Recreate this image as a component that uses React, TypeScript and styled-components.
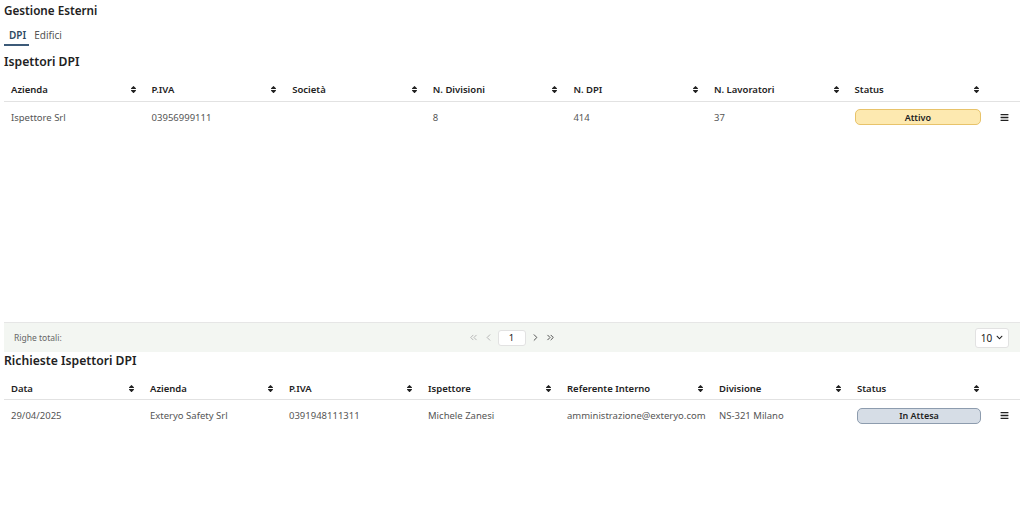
import React from "react";
import styled, { createGlobalStyle } from "styled-components";
import { FaSort, FaBars, FaChevronDown } from "react-icons/fa";
import { ChevronLeft, ChevronRight, ChevronsLeft, ChevronsRight } from "lucide-react";

const Global = createGlobalStyle`
  html, body { margin: 0; padding: 0; background: #fff; }
  body { font-family: "Noto Sans", "Open Sans", sans-serif; color: #333; }
  * { box-sizing: border-box; }
`;

const Page = styled.div`
  display: flex;
  flex-direction: column;
  padding: 0 4px;
  width: 1024px;
  height: 530px;
`;

const Title = styled.h1`
  margin: 0;
  padding-top: 2px;
  font-size: 11.7px;
  font-weight: 600;
  color: #222;
  height: 28px;
  line-height: 16px;
`;

const Tabs = styled.div`
  display: flex;
  height: 22px;
  align-items: flex-start;
`;

const Tab = styled.div<{ $active?: boolean }>`
  font-size: 10px;
  line-height: 14px;
  padding: 0 3px 2px 5px;
  color: ${(p) => (p.$active ? "#2d4a63" : "#555")};
  font-weight: ${(p) => (p.$active ? 600 : 400)};
  border-bottom: 2px solid ${(p) => (p.$active ? "#3c5a78" : "transparent")};
`;

const SectionTitle = styled.h2<{ $first?: boolean }>`
  margin: 0;
  font-size: 12.2px;
  font-weight: 600;
  color: #222;
  line-height: 18px;
  height: ${(p) => (p.$first ? "28.5px" : "25px")};
  padding-top: ${(p) => (p.$first ? "3px" : "0")};
`;

const TableBox = styled.div<{ $h?: number }>`
  display: flex;
  flex-direction: column;
  height: ${(p) => (p.$h ? `${p.$h}px` : "auto")};
`;

const Grid = styled.div<{ $cols: string }>`
  display: grid;
  grid-template-columns: ${(p) => p.$cols};
`;

const HeadRow = styled(Grid)`
  height: 23px;
  border-bottom: 1.5px solid #e2e2e2;
  align-items: center;
`;

const HeadCell = styled.div`
  display: flex;
  align-items: center;
  justify-content: space-between;
  padding: 0 7px 0 7px;
  font-size: 9.5px;
  font-weight: 600;
  color: #222;
  svg { width: 9px; height: 9px; color: #222; }
`;

const BodyRow = styled(Grid)`
  height: 31px;
  align-items: center;
`;

const Cell = styled.div`
  padding: 0 7px;
  font-size: 9.5px;
  color: #555;
  white-space: nowrap;
`;

const Badge = styled.div<{ $kind: "yellow" | "gray" }>`
  height: 16px;
  border-radius: 5px;
  display: flex;
  align-items: center;
  justify-content: center;
  font-size: 9px;
  font-weight: 600;
  color: #222;
  background: ${(p) => (p.$kind === "yellow" ? "#fde9b0" : "#d6dde6")};
  border: 1px solid ${(p) => (p.$kind === "yellow" ? "#e8c36a" : "#8d9cae")};
`;

const MenuCell = styled.div`
  display: flex;
  justify-content: center;
  svg { width: 9px; height: 9px; color: #222; }
`;

const Spacer = styled.div`
  flex: 1;
`;

const Footer = styled.div`
  height: 30px;
  background: #f3f6f2;
  border-top: 1.5px solid #e6e6e6;
  display: grid;
  grid-template-columns: 1fr auto 1fr;
  align-items: center;
  padding: 0 11px 0 10px;
`;

const FooterLabel = styled.div`
  font-size: 8.5px;
  color: #666;
`;

const Pager = styled.div`
  display: flex;
  align-items: center;
  gap: 4px;
`;

const PagerArrow = styled.span<{ $dim?: boolean }>`
  display: flex;
  color: ${(p) => (p.$dim ? "#b0b0b0" : "#444")};
  svg { width: 11px; height: 11px; }
`;

const PageBox = styled.div`
  width: 28px;
  height: 16px;
  background: #fff;
  border: 1px solid #e2e2e2;
  border-radius: 3px;
  font-size: 9.5px;
  color: #222;
  display: flex;
  align-items: center;
  justify-content: center;
`;

const SizeSelect = styled.div`
  justify-self: end;
  width: 34px;
  height: 20px;
  background: #fff;
  border: 1px solid #e2e2e2;
  border-radius: 3px;
  display: flex;
  align-items: center;
  justify-content: center;
  gap: 4px;
  font-size: 10px;
  color: #222;
  svg { width: 7px; height: 7px; }
`;

const cols1 = "repeat(7, 140.6px) 32px";
const cols2 = "139px 139px 139px 139px 152px 138px 138px 32px";

function Head({ labels, cols }: { labels: string[]; cols: string }) {
  return (
    <HeadRow $cols={cols}>
      {labels.map((l) => (
        <HeadCell key={l}>
          <span>{l}</span>
          <FaSort />
        </HeadCell>
      ))}
      <div />
    </HeadRow>
  );
}

export default function App() {
  return (
    <>
      <Global />
      <Page>
        <Title>Gestione Esterni</Title>
        <Tabs>
          <Tab $active>DPI</Tab>
          <Tab>Edifici</Tab>
        </Tabs>
        <SectionTitle $first>Ispettori DPI</SectionTitle>
        <TableBox $h={273.5}>
          <Head
            cols={cols1}
            labels={["Azienda", "P.IVA", "Società", "N. Divisioni", "N. DPI", "N. Lavoratori", "Status"]}
          />
          <BodyRow $cols={cols1}>
            <Cell>Ispettore Srl</Cell>
            <Cell>03956999111</Cell>
            <Cell></Cell>
            <Cell>8</Cell>
            <Cell>414</Cell>
            <Cell>37</Cell>
            <Cell>
              <Badge $kind="yellow">Attivo</Badge>
            </Cell>
            <MenuCell>
              <FaBars />
            </MenuCell>
          </BodyRow>
          <Spacer />
          <Footer>
            <FooterLabel>Righe totali:</FooterLabel>
            <Pager>
              <PagerArrow $dim><ChevronsLeft /></PagerArrow>
              <PagerArrow $dim><ChevronLeft /></PagerArrow>
              <PageBox>1</PageBox>
              <PagerArrow><ChevronRight /></PagerArrow>
              <PagerArrow><ChevronsRight /></PagerArrow>
            </Pager>
            <SizeSelect>
              10 <FaChevronDown />
            </SizeSelect>
          </Footer>
        </TableBox>
        <SectionTitle>Richieste Ispettori DPI</SectionTitle>
        <TableBox>
          <Head
            cols={cols2}
            labels={["Data", "Azienda", "P.IVA", "Ispettore", "Referente Interno", "Divisione", "Status"]}
          />
          <BodyRow $cols={cols2}>
            <Cell>29/04/2025</Cell>
            <Cell>Exteryo Safety Srl</Cell>
            <Cell>0391948111311</Cell>
            <Cell>Michele Zanesi</Cell>
            <Cell>amministrazione@exteryo.com</Cell>
            <Cell>NS-321 Milano</Cell>
            <Cell>
              <Badge $kind="gray">In Attesa</Badge>
            </Cell>
            <MenuCell>
              <FaBars />
            </MenuCell>
          </BodyRow>
        </TableBox>
      </Page>
    </>
  );
}
